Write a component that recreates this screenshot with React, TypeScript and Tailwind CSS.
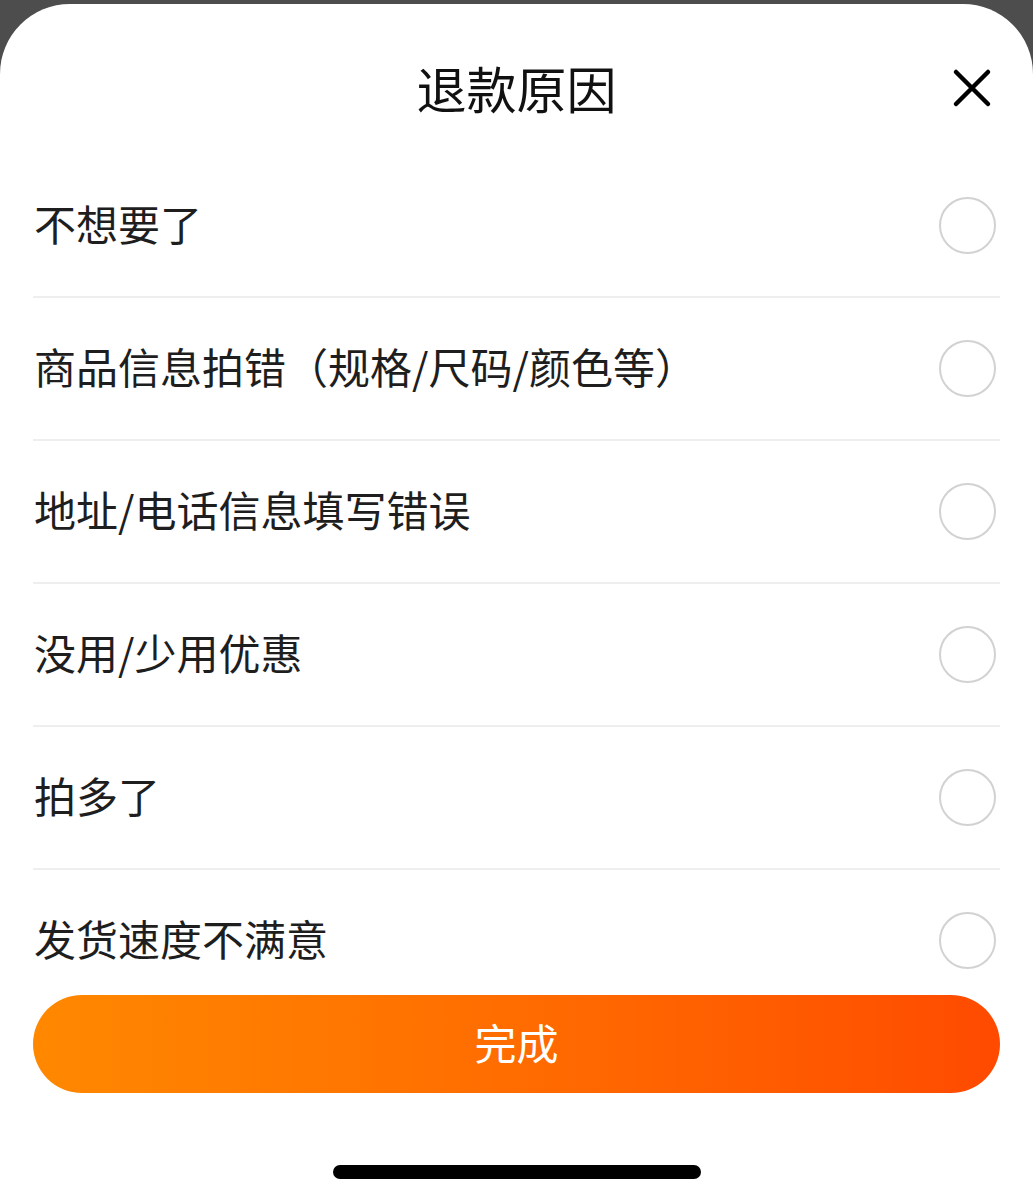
import React from "react";

const reasons = [
  "不想要了",
  "商品信息拍错（规格/尺码/颜色等）",
  "地址/电话信息填写错误",
  "没用/少用优惠",
  "拍多了",
  "发货速度不满意",
];

export default function App() {
  return (
    <div className="h-[1200px] w-full overflow-hidden bg-[#4d4d4d] pt-[4px] font-['Noto_Sans_CJK_SC','Noto_Sans',sans-serif]">
      <div className="flex h-[1196px] flex-col rounded-t-[70px] bg-white">
        <div className="grid grid-cols-[1fr_auto_1fr] items-start pt-[58px] pb-[43px]">
          <div />
          <h1 className="text-[50px] leading-[50px] font-normal text-[#111111]">退款原因</h1>
          <div className="flex justify-end pr-[41px] pt-[6px]">
            <button className="flex h-[40px] w-[40px] items-center justify-center">
              <svg width="40" height="40" viewBox="0 0 40 40" fill="none">
                <path d="M4 4L36 36M36 4L4 36" stroke="#000" strokeWidth="4.5" strokeLinecap="round" />
              </svg>
            </button>
          </div>
        </div>

        <div className="h-[840px] overflow-hidden">
          {reasons.map((r) => (
            <div
              key={r}
              className="mx-[33px] flex h-[143px] items-center justify-between border-b-2 border-[#eeeeee]"
            >
              <span className="pb-[5px] pl-[1px] text-[42px] leading-none text-[#1e1e1e]">{r}</span>
              <span className="mr-[4px] h-[57px] w-[57px] rounded-full border-2 border-[#d2d2d2]" />
            </div>
          ))}
        </div>

        <div className="px-[33px]">
          <button className="flex h-[98px] w-full items-center justify-center rounded-full bg-gradient-to-r from-[#ff8800] to-[#ff4a00] pb-[4px] text-[42px] leading-none text-white">
            完成
          </button>
        </div>

        <div className="mt-[72px] flex justify-center">
          <div className="h-[14px] w-[368px] rounded-full bg-black" />
        </div>
      </div>
    </div>
  );
}
